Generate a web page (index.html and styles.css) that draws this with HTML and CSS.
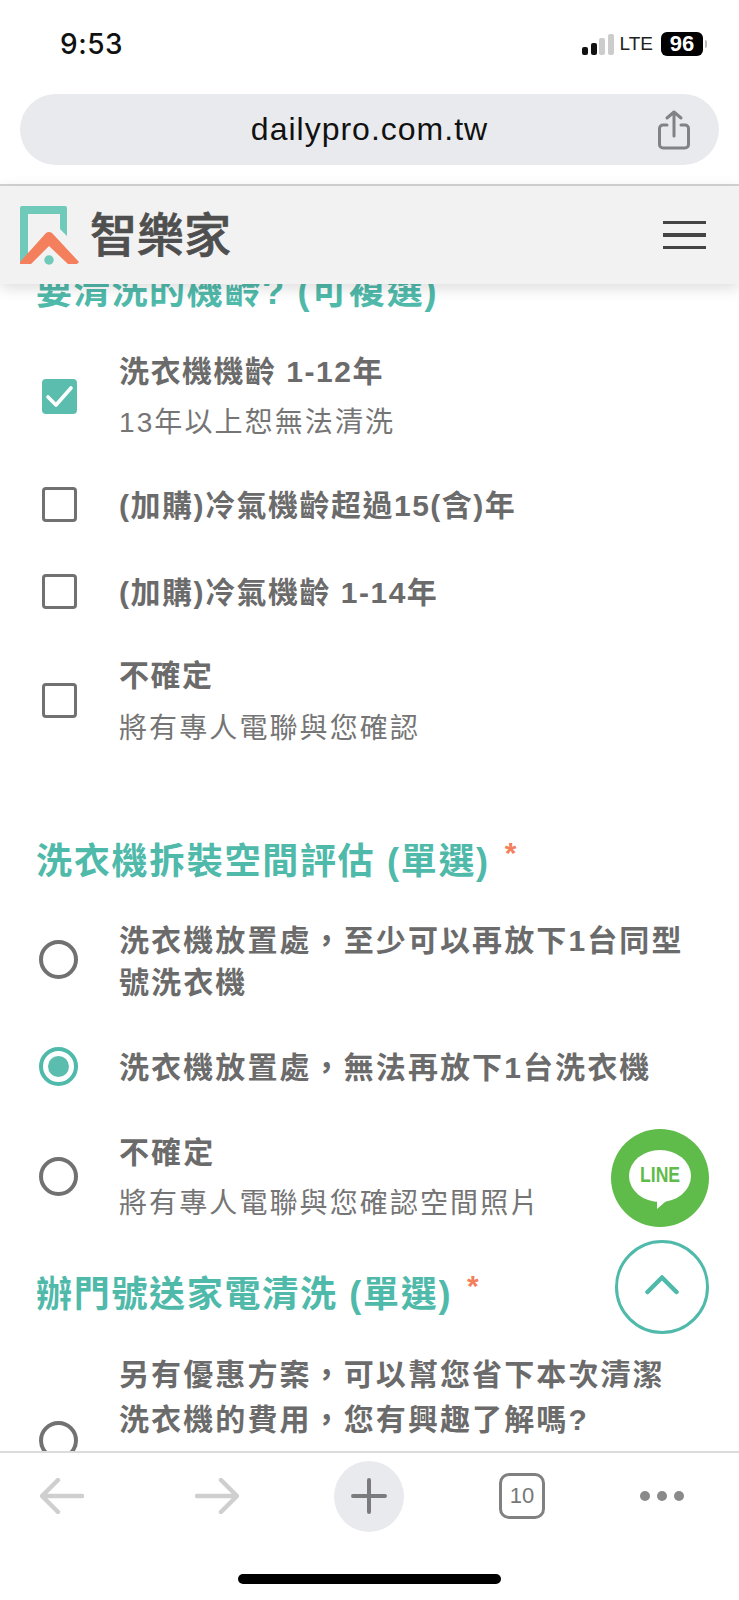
FILE: index.html
```html
<!DOCTYPE html>
<html lang="zh-Hant">
<head>
<meta charset="utf-8">
<title>智樂家</title>
<link rel="stylesheet" href="styles.css">
</head>
<body>
<div class="phone">
  <div class="status">
    <span class="time">9:53</span>
    <div class="status-right">
      <div class="signal"><i class="on s1"></i><i class="on s2"></i><i class="s3"></i><i class="s4"></i></div>
      <span class="lte">LTE</span>
      <span class="battery">96</span>
      <span class="nub"></span>
    </div>
  </div>
  <div class="urlwrap">
    <div class="urlbar">
      <span class="url">dailypro.com.tw</span>
      <svg class="share" viewBox="0 0 32 40" width="32" height="40" fill="none" stroke="#808285" stroke-width="3" stroke-linecap="round" stroke-linejoin="round"><path d="M9 15H5a3.5 3.5 0 0 0-3.5 3.5v16A3.5 3.5 0 0 0 5 38h22a3.5 3.5 0 0 0 3.5-3.5v-16A3.5 3.5 0 0 0 27 15h-4"/><path d="M16 26V2M9 8l7-6 7 6"/></svg>
    </div>
  </div>
  <header class="site-header">
    <svg class="logo" viewBox="0 0 60 59" width="60" height="59"><path d="M2 0H45a2 2 0 0 1 2 2V30L40 23V8H8V50L0 58V2a2 2 0 0 1 2-2z" fill="#6fcaba"/><path d="M0 56 26 27q3-2 6 0L59 56l-2 2H48L29 40 11 58H0z" fill="#f37f5c"/><circle cx="29" cy="54" r="4.7" fill="#6fcaba"/></svg>
    <span class="brand">智樂家</span>
    <div class="burger"><i></i><i></i><i></i></div>
  </header>
  <main class="viewport">
    <div class="scroll">
      <section class="group first">
        <h2 class="q">要清洗的機齡? (可複選)<span class="req">*</span></h2>
        <label class="opt o1"><span class="check on"><svg viewBox="0 0 36 36" width="36" height="36" fill="none" stroke="#fff" stroke-width="3.6" stroke-linecap="round" stroke-linejoin="round"><path d="M6 19l8 8L29 10"/></svg></span><span class="txt"><b>洗衣機機齡 1-12年</b><small>13年以上恕無法清洗</small></span></label>
        <label class="opt o2"><span class="check"></span><span class="txt"><b>(加購)冷氣機齡超過15(含)年</b></span></label>
        <label class="opt o3"><span class="check"></span><span class="txt"><b>(加購)冷氣機齡 1-14年</b></span></label>
        <label class="opt o4"><span class="check"></span><span class="txt"><b>不確定</b><small>將有專人電聯與您確認</small></span></label>
      </section>
      <section class="group second">
        <h2 class="q">洗衣機拆裝空間評估 (單選)<span class="req">*</span></h2>
        <label class="opt r1"><span class="radio"></span><span class="txt"><b>洗衣機放置處，至少可以再放下1台同型號洗衣機</b></span></label>
        <label class="opt r2"><span class="radio on"></span><span class="txt"><b>洗衣機放置處，無法再放下1台洗衣機</b></span></label>
        <label class="opt r3"><span class="radio"></span><span class="txt"><b>不確定</b><small>將有專人電聯與您確認空間照片</small></span></label>
      </section>
      <section class="group third">
        <h2 class="q">辦門號送家電清洗 (單選)<span class="req">*</span></h2>
        <label class="opt r4"><span class="radio"></span><span class="txt"><b>另有優惠方案，可以幫您省下本次清潔洗衣機的費用，您有興趣了解嗎?</b></span></label>
      </section>
    </div>
    <a class="fab line"><span class="bubble"><span class="line-word">LINE</span></span></a>
    <a class="fab up"><svg viewBox="0 0 34 20" width="34" height="20" fill="none" stroke="#4fb9aa" stroke-width="4.5" stroke-linecap="round" stroke-linejoin="round"><path d="M2.5 17 17 2.5 31.5 17"/></svg></a>
  </main>
  <footer class="toolbar">
    <svg class="tool" viewBox="0 0 44 36" width="44" height="36" fill="none" stroke="#cfcfcf" stroke-width="4.5" stroke-linecap="round" stroke-linejoin="round"><path d="M42 18H3M18 2 2 18l16 16"/></svg>
    <svg class="tool" viewBox="0 0 44 36" width="44" height="36" fill="none" stroke="#cfcfcf" stroke-width="4.5" stroke-linecap="round" stroke-linejoin="round"><path d="M2 18h39M26 2l16 16-16 16"/></svg>
    <span class="plus"><svg viewBox="0 0 36 36" width="36" height="36" fill="none" stroke="#7b7b7d" stroke-width="4" stroke-linecap="round"><path d="M18 2v32M2 18h32"/></svg></span>
    <span class="tabs">10</span>
    <span class="dots"><i></i><i></i><i></i></span>
  </footer>
  <div class="home"><i></i></div>
</div>
</body>
</html>
```
FILE: styles.css
```css
* { box-sizing: border-box; }
html, body { margin: 0; padding: 0; background: #fff; }
body { font-family: "Liberation Sans", "Noto Sans CJK TC", sans-serif; }
.phone { width: 739px; height: 1600px; display: flex; flex-direction: column; overflow: hidden; position: relative; }

.status { height: 94px; flex: none; display: flex; justify-content: space-between; align-items: flex-start; padding: 28px 32px 0 60px; }
.time { font-size: 28px; font-weight: 500; line-height: 32px; color: #111; letter-spacing: .5px; font-family: "Inter", "Liberation Sans", sans-serif; }
.status-right { display: flex; align-items: center; height: 32px; }
.signal { display: flex; align-items: flex-end; gap: 2.5px; height: 22px; margin-right: 6px; }
.signal i { width: 6px; background: #ccc; border-radius: 2px; }
.signal .on { background: #111; }
.s1 { height: 8px; } .s2 { height: 12px; } .s3 { height: 17px; } .s4 { height: 21px; }
.lte { font-size: 19px; color: #222; margin-right: 8px; }
.battery { width: 42px; height: 24px; background: #000; color: #fff; border-radius: 6px; font-size: 22px; font-weight: 700; line-height: 24px; text-align: center; }
.nub { width: 2px; height: 8px; background: #bbb; margin-left: 2px; border-radius: 0 2px 2px 0; }

.urlwrap { height: 92px; flex: none; padding: 0 20px; border-bottom: 2px solid #d4d4d4; }
.urlbar { height: 71px; border-radius: 36px; background: #e9eaed; display: flex; align-items: center; justify-content: center; position: relative; }
.url { font-size: 32px; color: #111; letter-spacing: 1px; }
.share { position: absolute; right: 29px; top: 16px; }

.site-header { height: 98px; flex: none; background: #f2f2f2; display: flex; align-items: center; padding: 0 33px 0 20px; box-shadow: 0 4px 14px rgba(0,0,0,.14); position: relative; z-index: 2; }
.logo { flex: none; }
.brand { font-family: "Noto Sans CJK TC", sans-serif; font-size: 47px; color: #4f4f4f; margin: -7px 0 0 10px; line-height: 1; font-weight: 500; -webkit-text-stroke: .7px #4f4f4f; }
.burger { margin-left: auto; width: 43px; display: flex; flex-direction: column; gap: 9px; }
.burger i { display: block; height: 3.5px; background: #444; }

.viewport { flex: 1; min-height: 0; overflow: hidden; position: relative; }
.scroll { margin-top: -14px; padding: 0 53px 0 42px; }

.group { display: flex; flex-direction: column; }
.q { margin: 0 0 0 -6px; font-size: 36px; line-height: 44px; font-weight: 700; color: #4fb9aa; letter-spacing: 1.7px; white-space: nowrap; }
.req { color: #f37f5c; font-size: 30px; line-height: 0; vertical-align: 11px; margin-left: 15px; font-weight: 700; }

.opt { display: flex; align-items: center; }
.txt { display: flex; flex-direction: column; margin-left: 42px; min-width: 0; flex: 1; }
.txt b { font-size: 30px; line-height: 44px; font-weight: 700; color: #6b6b6b; letter-spacing: 1.5px; }
.r1 .txt b, .r2 .txt b, .r3 .txt b, .r4 .txt b { letter-spacing: 2.1px; }
.txt small { font-size: 28px; line-height: 44px; font-weight: 400; color: #757575; letter-spacing: 2.1px; margin-top: 7px; }

.check { flex: none; width: 35px; height: 35px; margin-bottom: 3px; border: 3.5px solid #717171; border-radius: 4px; display: flex; align-items: center; justify-content: center; }
.check.on { background: #5bbdad; border-color: #5bbdad; }
.check svg { flex: none; }

.radio { flex: none; width: 39px; height: 39px; border: 4px solid #717171; border-radius: 50%; margin: 0 -1px 0 -3px; display: flex; align-items: center; justify-content: center; }
.radio.on { border-color: #4fb9aa; }
.radio.on::after { content: ""; width: 21px; height: 21px; border-radius: 50%; background: #5bbdad; }

.o1 { margin-top: 36px; }
.o2 { margin-top: 39px; }
.o3 { margin-top: 43px; }
.o4 { margin-top: 39px; }
.second { margin-top: 89px; }
.o4 .check { margin-bottom: 4px; }
.o4 small { margin-top: 9px; }
.r1 { margin-top: 36px; }
.r1 b { line-height: 42px; }
.r1 .radio { margin-bottom: 6px; }
.r2 { margin-top: 42px; }
.r2 .radio { margin-bottom: 3px; }
.r3 { margin-top: 41px; }
.r3 .radio { margin-bottom: 4px; }
.third { margin-top: 47px; }
.r4 { margin-top: 35px; }
.r4 .txt b { line-height: 45px; }
.r4 .txt { padding-bottom: 86px; }

.fab { position: absolute; border-radius: 50%; display: flex; align-items: center; justify-content: center; }
.line { left: 611px; top: 845px; width: 98px; height: 98px; background: #5fbb4a; }
.bubble { width: 62px; height: 52px; border-radius: 50%; background: #fff; color: #5fbb4a; font-weight: 700; font-size: 22px; line-height: 50px; text-align: center; position: relative; margin-top: -4px; }
.line-word { display: inline-block; transform: scaleX(.8); }
.bubble::after { content: ""; position: absolute; left: 28px; top: 46px; width: 15px; height: 13px; background: #fff; clip-path: polygon(0 0, 100% 0, 0 100%); }
.up { left: 615px; top: 956px; width: 94px; height: 94px; background: #fff; border: 3px solid #4fb9aa; }
.up svg { margin-top: -4px; }

.toolbar { height: 88px; flex: none; background: #fff; border-top: 2px solid #dcdcdc; display: flex; align-items: center; position: relative; padding-left: 40px; z-index: 2; }
.tool:nth-child(2) { margin-left: 111px; }
.plus { width: 70px; height: 71px; margin-left: 95px; border-radius: 50%; background: #e9eaed; display: flex; align-items: center; justify-content: center; }
.tabs { width: 46px; height: 46px; margin-left: 95px; border: 3.5px solid #808080; border-radius: 10px; color: #777; font-size: 22px; display: flex; align-items: center; justify-content: center; }
.dots { display: flex; gap: 7px; margin-left: 95px; }
.dots i { width: 10px; height: 10px; border-radius: 50%; background: #8a8a8a; }

.home { height: 61px; flex: none; background: #fff; display: flex; justify-content: center; padding-top: 35px; z-index: 2; position: relative; }
.home i { width: 263px; height: 10px; background: #000; border-radius: 5px; }
```
